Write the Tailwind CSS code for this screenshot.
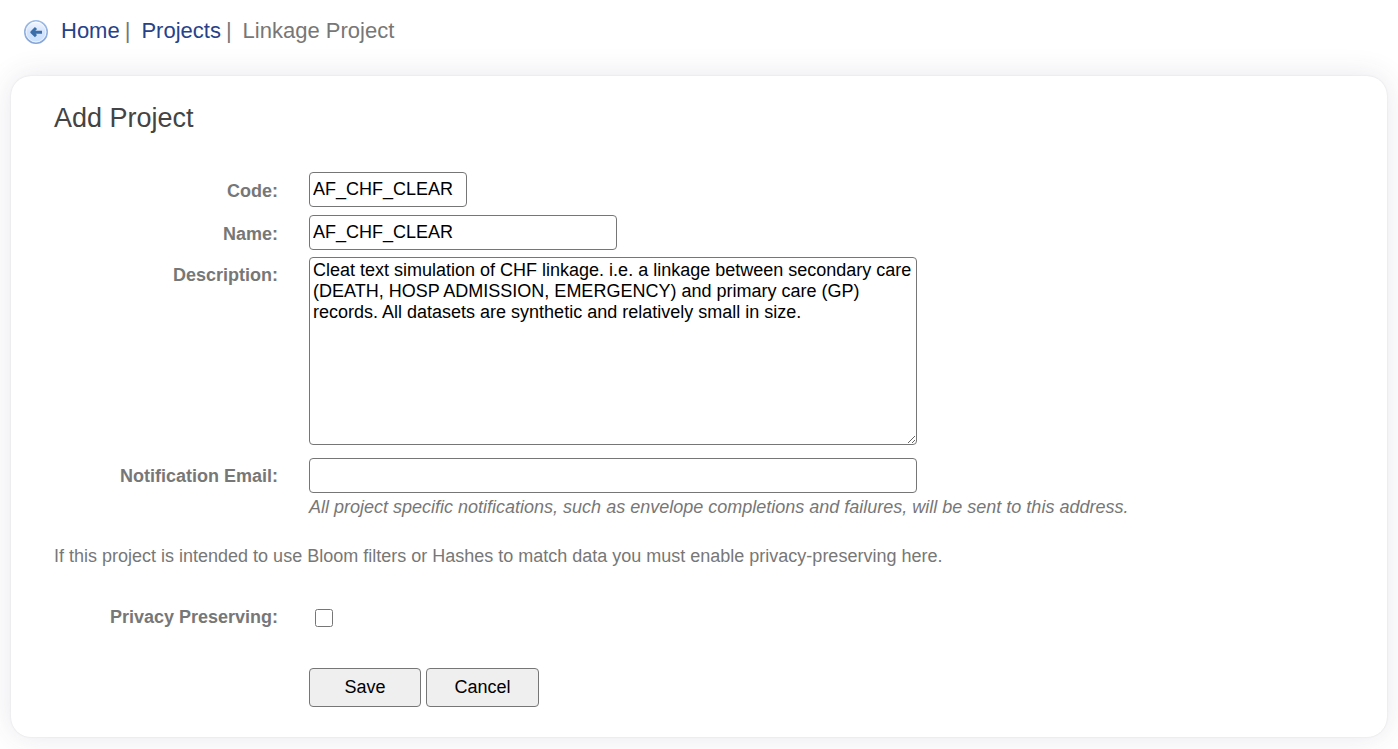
<!DOCTYPE html>
<html lang="en">

<head>
    <meta charset="UTF-8" />
    <meta name="viewport" content="width=device-width, initial-scale=1.0" />
    <title>Linkage Project - Add Project</title>
    <script src="https://cdn.jsdelivr.net/npm/@tailwindcss/browser@4"></script>
</head>

<body class="bg-white font-['Liberation_Sans',Arial,sans-serif] text-[18px] leading-[21px] text-[#777]">
    <nav class="flex items-center pl-6 pt-4 text-[22px] leading-[30px]" aria-label="Breadcrumb">
        <a href="#" class="mr-[13px] mt-[2px]" aria-label="Back">
            <svg class="size-6" viewBox="0 0 24 24">
                <defs>
                    <linearGradient id="disc" x1="0" y1="0" x2="0" y2="1">
                        <stop offset="0" stop-color="#f4f8ff" />
                        <stop offset="0.5" stop-color="#d3e3fc" />
                        <stop offset="1" stop-color="#c9e2ff" />
                    </linearGradient>
                    <linearGradient id="rim" x1="0" y1="0" x2="0" y2="1">
                        <stop offset="0" stop-color="#9dbce8" />
                        <stop offset="1" stop-color="#86a5d6" />
                    </linearGradient>
                </defs>
                <circle cx="12" cy="12" r="11.2" fill="url(#disc)" stroke="url(#rim)" stroke-width="1.6" />
                <circle cx="12" cy="12" r="9.9" fill="none" stroke="#fff" stroke-opacity="0.6" />
                <path d="M12 8 L7.8 12.2 L12 16.2 M8.2 12.2 H18" fill="none" stroke="#3b6ea8" stroke-width="3" stroke-linejoin="round" />
            </svg>
        </a>
        <a href="#" class="text-[#26428b]">Home</a>
        <span class="mx-[5px]">|</span>
        <a href="#" class="ml-[6px] text-[#26428b]">Projects</a>
        <span class="mx-[5px]">|</span>
        <span class="ml-[6px]">Linkage Project</span>
    </nav>

    <main class="mx-[11px] mt-[30px] mb-3 rounded-[20px] bg-white px-[43px] pt-[27px] pb-[30px] shadow-[0_0_2px_#0000001a,0_0_30px_#3c3c641f]">
        <h1 class="text-[27px] leading-[31px] text-[#444]">Add Project</h1>

        <form class="mt-[38px]">
            <div class="flex flex-col gap-2">
                <div class="flex items-center gap-[31px]">
                    <label for="code" class="w-56 shrink-0 pt-1 text-right font-bold">Code:</label>
                    <input id="code" type="text" value="AF_CHF_CLEAR" class="h-[35px] w-[158px] rounded-[4px] border border-[#767676] bg-white px-[3px] pb-px text-black" />
                </div>
                <div class="flex items-center gap-[31px]">
                    <label for="name" class="w-56 shrink-0 pt-1 text-right font-bold">Name:</label>
                    <input id="name" type="text" value="AF_CHF_CLEAR" class="h-[35px] w-[308px] rounded-[4px] border border-[#767676] bg-white px-[3px] pb-px text-black" />
                </div>
            </div>

            <div class="mt-[7px] flex items-start gap-[31px]">
                <label for="description" class="w-56 shrink-0 pt-2 text-right font-bold">Description:</label>
                <textarea id="description" class="h-[188px] w-[608px] rounded-[4px] border border-[#767676] bg-white px-[3px] py-[2px] text-black">Cleat text simulation of CHF linkage. i.e. a linkage between secondary care (DEATH, HOSP ADMISSION, EMERGENCY) and primary care (GP) records. All datasets are synthetic and relatively small in size.</textarea>
            </div>

            <div class="mt-[13px] flex items-start gap-[31px]">
                <label for="email" class="w-56 shrink-0 pt-2 text-right font-bold">Notification Email:</label>
                <div>
                    <input id="email" type="email" aria-describedby="email-hint" class="block h-[35px] w-[608px] rounded-[4px] border border-[#767676] bg-white px-[3px] pb-px text-black" />
                    <p id="email-hint" class="mt-1 italic">All project specific notifications, such as envelope completions and failures, will be sent to this address.</p>
                </div>
            </div>

            <p class="mt-7">If this project is intended to use Bloom filters or Hashes to match data you must enable privacy-preserving here.</p>

            <div class="mt-10 flex items-center gap-[31px]">
                <label for="privacy" class="w-56 shrink-0 text-right font-bold">Privacy Preserving:</label>
                <input id="privacy" type="checkbox" class="ml-[6px] size-[18px]" />
            </div>

            <div class="mt-10 ml-[255px] flex gap-[5px]">
                <button type="submit" class="h-[39px] w-28 rounded-[4px] border border-[#767676] bg-[#efefef] text-black">Save</button>
                <button type="button" class="h-[39px] w-[113px] rounded-[4px] border border-[#767676] bg-[#efefef] text-black">Cancel</button>
            </div>
        </form>
    </main>
</body>

</html>
